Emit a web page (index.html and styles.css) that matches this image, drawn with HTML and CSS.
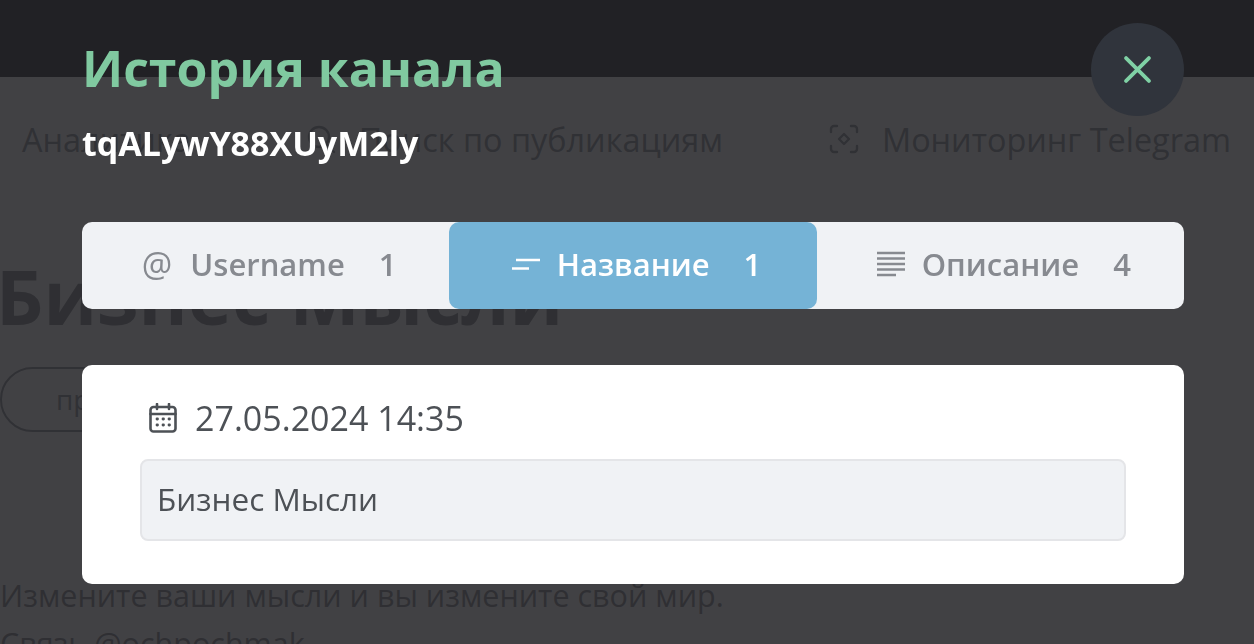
FILE: index.html
```html
<!DOCTYPE html>
<html lang="ru">
<head>
  <meta charset="UTF-8" />
  <meta name="viewport" content="width=device-width, initial-scale=1" />
  <title>История канала</title>
  <link rel="stylesheet" href="styles.css">
</head>
<body>
  <!-- Page behind the modal -->
  <div class="page">
    <div class="topbar"></div>
    <nav class="nav">
      <span class="nav-item">Аналитика</span>
      <span class="nav-item nav-search">
        <svg class="nav-icon" viewBox="0 0 32 32" fill="none" stroke="currentColor" stroke-width="2.400" stroke-linecap="round">
          <circle cx="14" cy="14" r="10" />
          <path d="M22 22l7 7" />
        </svg>
        Поиск по публикациям
      </span>
      <span class="nav-item nav-mon">
        <svg class="nav-icon" viewBox="0 0 32 32" fill="none" stroke="currentColor" stroke-width="2.400" stroke-linecap="round" stroke-linejoin="round">
          <path d="M9 3H6a3 3 0 0 0-3 3v3M23 3h3a3 3 0 0 1 3 3v3M9 29H6a3 3 0 0 1-3-3v-3M23 29h3a3 3 0 0 0 3-3v-3" />
          <path d="M16 11l5 5-5 5-5-5z" />
        </svg>
        Мониторинг Telegram
      </span>
    </nav>
    <h1 class="page-title">Бизнес Мысли</h1>
    <div class="pill">профиль</div>
    <p class="page-text page-text-first">Измените ваши мысли и вы измените свой мир.</p>
    <p class="page-text">Связь @ochpochmak</p>
  </div>

  <div class="overlay"></div>

  <!-- Modal -->
  <div class="modal">
    <button class="close" type="button" aria-label="Закрыть">
      <svg viewBox="0 0 26 26" fill="none" stroke="currentColor" stroke-width="3.600" stroke-linecap="round">
        <path d="M2 2l22 22M24 2L2 24" />
      </svg>
    </button>
    <h2 class="modal-title">История канала</h2>
    <div class="modal-id">tqALywY88XUyM2ly</div>

    <div class="tabs">
      <div class="tab">
        <span class="tab-at">@</span>
        <span class="tab-name">Username</span>
        <span class="tab-count">1</span>
      </div>
      <div class="tab tab-active">
        <svg class="tab-icon" viewBox="0 0 28 12" fill="none" stroke="currentColor" stroke-width="2.400">
          <path d="M4 2h24M0 10.500h17" />
        </svg>
        <span class="tab-name">Название</span>
        <span class="tab-count">1</span>
      </div>
      <div class="tab">
        <svg class="tab-icon tab-icon-lines" viewBox="0 0 28 26" fill="none" stroke="currentColor" stroke-width="2.600">
          <path d="M0 2h28M0 7.500h28M0 13h28M0 18.500h28M0 24h19" />
        </svg>
        <span class="tab-name">Описание</span>
        <span class="tab-count">4</span>
      </div>
    </div>

    <div class="card">
      <div class="entry-date">
        <svg class="cal" viewBox="0 0 28 30" fill="none" stroke="currentColor" stroke-width="2.600" stroke-linecap="round" stroke-linejoin="round">
          <rect x="1.500" y="4" width="25" height="24.500" rx="3" />
          <path d="M1.500 11h25M8 1v5M20 1v5" />
          <path d="M8 16h.5M14 16h.5M20 16h.5M8 22h.5M14 22h.5M20 22h.5" stroke-width="2.800" />
        </svg>
        27.05.2024 14:35
      </div>
      <div class="entry-value">Бизнес Мысли</div>
    </div>
  </div>
</body>
</html>
```

FILE: styles.css
```css
* {
  box-sizing: border-box;
}
html, body {
  height: 100%;
}
body {
  margin: 0;
  background: #fff;
  font-family: "Open Sans", "Noto Sans", sans-serif;
  overflow: hidden;
}

/* page behind */
.page {
  height: 644px;
  overflow: hidden;
}
.topbar {
  height: 77px;
  background: #43454a;
}
.nav {
  display: flex;
  align-items: center;
  height: 124px;
  font-size: 32.4px;
  padding-left: 22px;
  white-space: nowrap;
  color: #9c9ea4;
}
.nav-item {
  display: flex;
  align-items: center;
}
.nav-search {
  gap: 22px;
  margin-left: 114px;
}
.nav-mon {
  margin-left: 105px;
  gap: 22px;
}
.nav-icon {
  width: 32px;
  height: 32px;
}
.page-title {
  margin: 50px 0 0 -4px;
  font-size: 74.500px;
  font-weight: 700;
  line-height: 90px;
  color: #95979c;
  white-space: nowrap;
}
.pill {
  width: 240px;
  height: 65px;
  margin-top: 26px;
  padding-left: 54px;
  line-height: 60px;
  font-size: 28px;
  border: 2px solid #9c9ea4;
  border-radius: 33px;
  color: #9c9ea4;
}
.page-text {
  margin: 0;
  font-size: 30.500px;
  line-height: 48px;
  white-space: nowrap;
  color: #95979c;
}
.page-text-first {
  margin-top: 139px;
}
.overlay {
  position: fixed;
  inset: 0;
  background: rgba(26, 27, 30, 0.83);
}

/* modal */
.modal {
  position: absolute;
  left: 82px;
  top: 0;
  width: 1102px;
}
.close {
  position: absolute;
  right: 0;
  top: 23px;
  width: 93px;
  height: 93px;
  padding: 33px;
  border: none;
  border-radius: 50%;
  background: #30343c;
  color: #7fd1a5;
}
.close svg {
  display: block;
  width: 27px;
  height: 27px;
}
.modal-title {
  margin: 0;
  padding-top: 33px;
  font-size: 50px;
  line-height: 70px;
  font-weight: 700;
  color: #80c9a0;
}
.modal-id {
  margin-top: 17px;
  font-size: 34px;
  line-height: 46px;
  font-weight: 700;
  color: #fff;
}
.tabs {
  display: flex;
  height: 87px;
  margin-top: 56px;
  background: #f0f2f5;
  border-radius: 10px;
}
.tab {
  flex: 1;
  display: flex;
  align-items: center;
  justify-content: center;
  padding: 0 0 3px 7px;
  font-size: 31px;
  font-weight: 600;
  color: #878a90;
  border-radius: 10px;
}
.tab-active {
  background: #75b3d6;
  color: #fff;
}
.tab-at {
  font-size: 34px;
  font-weight: 400;
  margin-right: 18px;
}
.tab-icon {
  width: 28px;
  height: 12px;
  margin-right: 17px;
}
.tab-icon-lines {
  height: 26px;
}
.tab-count {
  margin-left: 34px;
}
.card {
  height: 219px;
  margin-top: 56px;
  padding: 33px 58px 0;
  background: #fff;
  border-radius: 10px;
}
.entry-date {
  display: flex;
  align-items: center;
  gap: 18px;
  height: 40px;
  padding-left: 9px;
  font-size: 34px;
  color: #4d5156;
}
.cal {
  width: 28px;
  height: 30px;
}
.entry-value {
  height: 82px;
  margin-top: 21px;
  padding-left: 15px;
  line-height: 76px;
  font-size: 31.500px;
  color: #4d5156;
  background: #f0f2f5;
  border: 2px solid #e4e5e8;
  border-radius: 8px;
}
```
